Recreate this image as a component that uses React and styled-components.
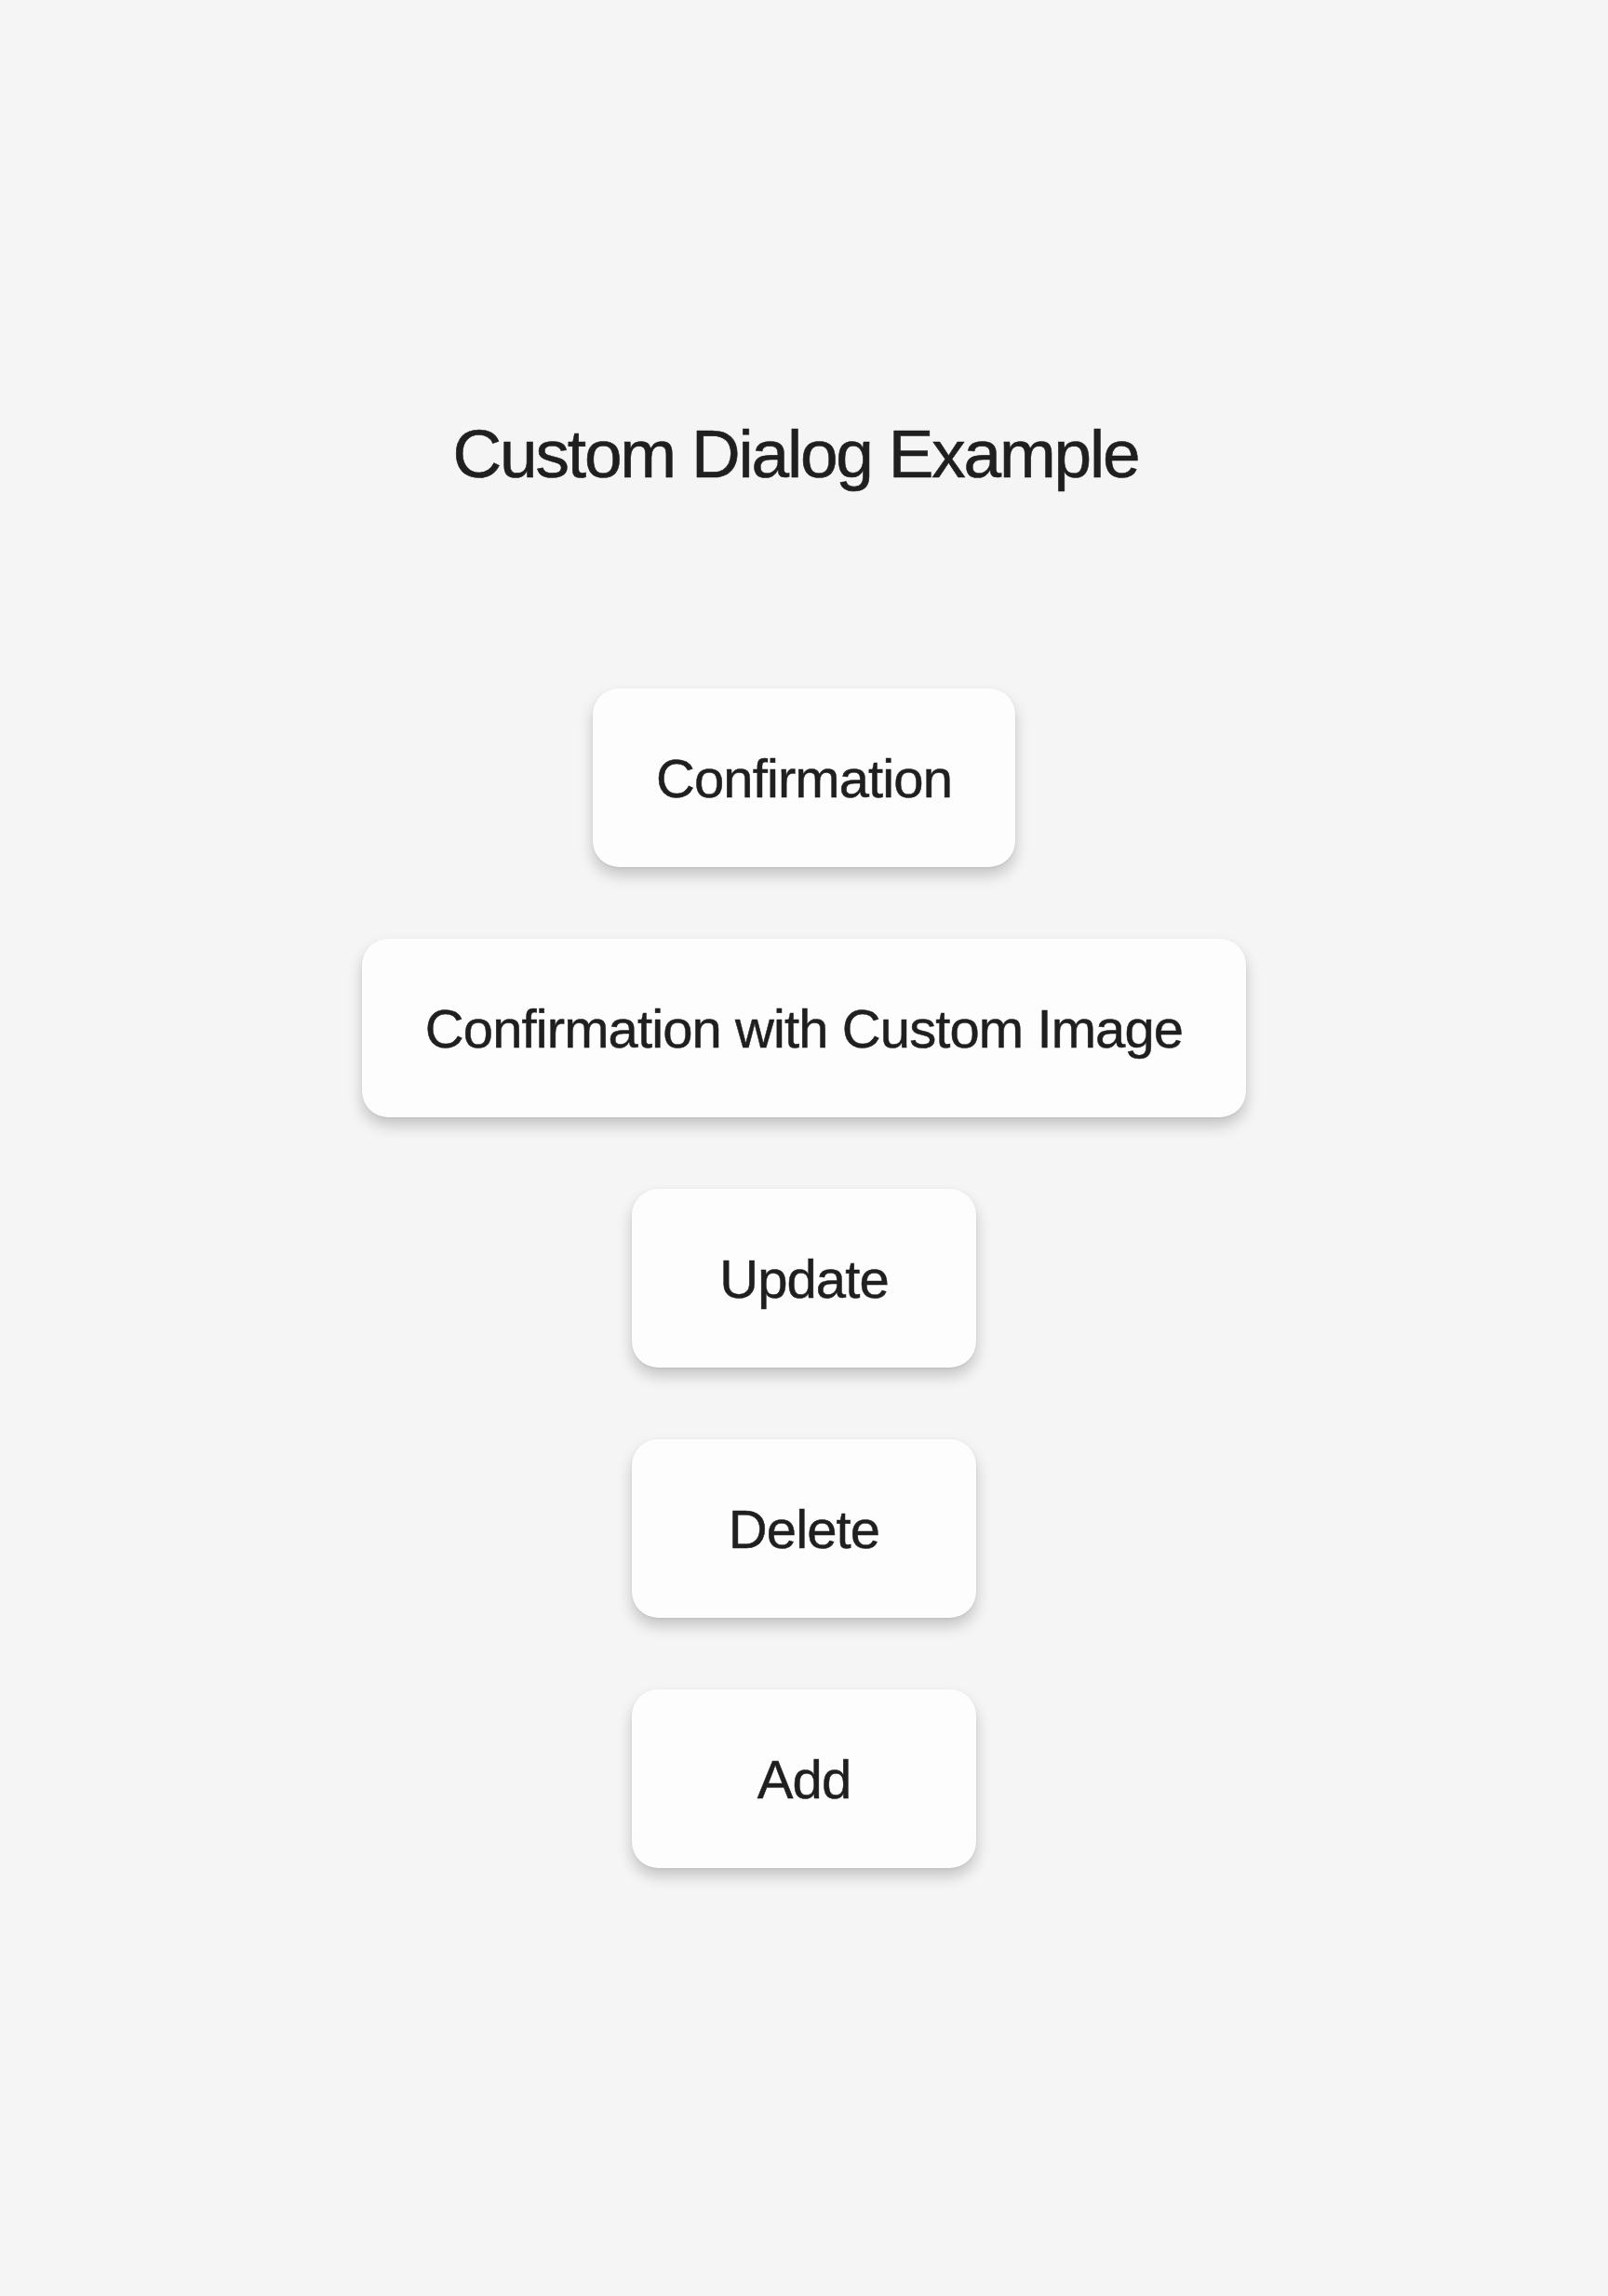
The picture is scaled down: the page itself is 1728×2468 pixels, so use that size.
import React from "react";
import styled, { createGlobalStyle } from "styled-components";

const GlobalStyle = createGlobalStyle`
  html, body {
    margin: 0;
    padding: 0;
    background-color: #f5f5f5;
  }
  body {
    font-family: "Liberation Sans", Arial, Helvetica, sans-serif;
    color: #222222;
  }
`;

const Page = styled.div`
  display: flex;
  flex-direction: column;
  align-items: center;
  min-height: 2468px;
  padding-top: 446px;
  box-sizing: border-box;
  background-color: #f5f5f5;
`;

const Title = styled.h1`
  margin: 0 18px 211px 0;
  font-size: 73px;
  font-weight: 400;
  line-height: 83px;
  letter-spacing: -2.2px;
  color: #1f1f1f;
  -webkit-text-stroke: 0.6px #1f1f1f;
`;

const ButtonList = styled.div`
  display: flex;
  flex-direction: column;
  align-items: center;
  gap: 77px;
`;

const DialogButton = styled.button`
  box-sizing: border-box;
  min-width: 370px;
  height: 192px;
  padding: 0 68px;
  border: 0;
  border-radius: 28px;
  background-color: #fdfdfd;
  box-shadow: 0 9px 16px rgba(0, 0, 0, 0.2), 0 1px 3px rgba(0, 0, 0, 0.06);
  font-family: "Liberation Sans", Arial, Helvetica, sans-serif;
  font-size: 58px;
  font-weight: 400;
  letter-spacing: -0.9px;
  color: #1f1f1f;
  -webkit-text-stroke: 0.5px #1f1f1f;
  cursor: pointer;
`;

const buttons = [
  "Confirmation",
  "Confirmation with Custom Image",
  "Update",
  "Delete",
  "Add",
];

export default function App() {
  return (
    <>
      <GlobalStyle />
      <Page>
        <Title>Custom Dialog Example</Title>
        <ButtonList>
          {buttons.map((label) => (
            <DialogButton key={label}>{label}</DialogButton>
          ))}
        </ButtonList>
      </Page>
    </>
  );
}
